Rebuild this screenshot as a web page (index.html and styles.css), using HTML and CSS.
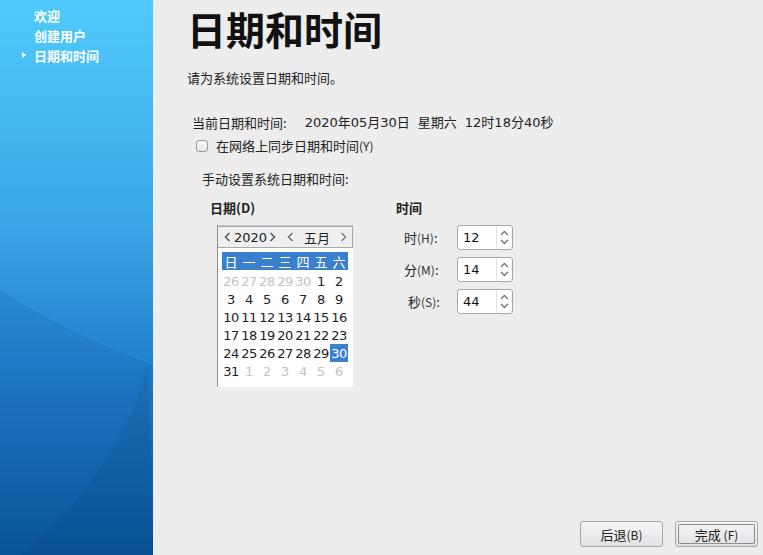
FILE: index.html
```html
<!DOCTYPE html>
<html lang="zh-CN">
<head>
<meta charset="utf-8">
<title>日期和时间</title>
<link rel="stylesheet" href="styles.css">
</head>
<body>
<div class="app">
  <aside class="sidebar">
    <svg class="deco" width="153" height="555" viewBox="0 0 153 555" aria-hidden="true">
      <path d="M0 290 Q70 335 153 365 L153 555 L0 555 Z" fill="#0a3c78" fill-opacity="0.10"/>
      <path d="M148 365 Q120 470 22 555 L153 555 Z" fill="#062f66" fill-opacity="0.10"/>
    </svg>
    <ul class="steps">
      <li>欢迎</li>
      <li>创建用户</li>
      <li class="current">日期和时间</li>
    </ul>
  </aside>
  <main class="main">
    <h1 class="title">日期和时间</h1>
    <p class="subtitle">请为系统设置日期和时间。</p>
    <div class="current-row">
      <span class="cur-label">当前日期和时间:</span>
      <span class="cur-value">2020年05月30日</span>
      <span class="cur-value">星期六</span>
      <span class="cur-value">12时18分40秒</span>
    </div>
    <label class="sync"><span class="checkbox"></span><span>在网络上同步日期和时间<small>(Y)</small></span></label>
    <div class="manual">手动设置系统日期和时间:</div>
    <div class="panels">
      <section class="date-panel">
        <div class="panel-title">日期(D)</div>
        <div class="calendar">
          <div class="cal-nav">
            <svg class="chev" width="7" height="10" viewBox="0 0 7 10"><path d="M5.5 1 L1.5 5 L5.5 9" fill="none" stroke="#555" stroke-width="1.5"/></svg>
            <span class="year">2020</span>
            <svg class="chev" width="7" height="10" viewBox="0 0 7 10"><path d="M1.5 1 L5.5 5 L1.5 9" fill="none" stroke="#555" stroke-width="1.5"/></svg>
            <svg class="chev chev-m" width="7" height="10" viewBox="0 0 7 10"><path d="M5.5 1 L1.5 5 L5.5 9" fill="none" stroke="#666" stroke-width="1.3"/></svg>
            <span class="month">五月</span>
            <svg class="chev chev-r" width="7" height="10" viewBox="0 0 7 10"><path d="M1.5 1 L5.5 5 L1.5 9" fill="none" stroke="#777" stroke-width="1.3"/></svg>
          </div>
          <div class="cal-grid">
            <span class="hd">日</span><span class="hd">一</span><span class="hd">二</span><span class="hd">三</span><span class="hd">四</span><span class="hd">五</span><span class="hd">六</span>
            <span class="o">26</span><span class="o">27</span><span class="o">28</span><span class="o">29</span><span class="o">30</span><span>1</span><span>2</span>
            <span>3</span><span>4</span><span>5</span><span>6</span><span>7</span><span>8</span><span>9</span>
            <span>10</span><span>11</span><span>12</span><span>13</span><span>14</span><span>15</span><span>16</span>
            <span>17</span><span>18</span><span>19</span><span>20</span><span>21</span><span>22</span><span>23</span>
            <span>24</span><span>25</span><span>26</span><span>27</span><span>28</span><span>29</span><span class="sel">30</span>
            <span>31</span><span class="o">1</span><span class="o">2</span><span class="o">3</span><span class="o">4</span><span class="o">5</span><span class="o">6</span>
          </div>
        </div>
      </section>
      <section class="time-panel">
        <div class="panel-title">时间</div>
        <div class="time-rows">
          <div class="trow"><span class="tlabel">时<small>(H)</small>:</span><div class="spin"><span class="sval">12</span><span class="sbtn"><svg width="9" height="6" viewBox="0 0 9 6"><path d="M1 5 L4.5 1.5 L8 5" fill="none" stroke="#777" stroke-width="1.4"/></svg><svg width="9" height="6" viewBox="0 0 9 6"><path d="M1 1 L4.5 4.5 L8 1" fill="none" stroke="#777" stroke-width="1.4"/></svg></span></div></div>
          <div class="trow"><span class="tlabel">分<small>(M)</small>:</span><div class="spin"><span class="sval">14</span><span class="sbtn"><svg width="9" height="6" viewBox="0 0 9 6"><path d="M1 5 L4.5 1.5 L8 5" fill="none" stroke="#777" stroke-width="1.4"/></svg><svg width="9" height="6" viewBox="0 0 9 6"><path d="M1 1 L4.5 4.5 L8 1" fill="none" stroke="#777" stroke-width="1.4"/></svg></span></div></div>
          <div class="trow"><span class="tlabel tl3">秒<small>(S)</small>:</span><div class="spin"><span class="sval">44</span><span class="sbtn"><svg width="9" height="6" viewBox="0 0 9 6"><path d="M1 5 L4.5 1.5 L8 5" fill="none" stroke="#777" stroke-width="1.4"/></svg><svg width="9" height="6" viewBox="0 0 9 6"><path d="M1 1 L4.5 4.5 L8 1" fill="none" stroke="#777" stroke-width="1.4"/></svg></span></div></div>
        </div>
      </section>
    </div>
    <div class="buttons">
      <button class="btn">后退<small>(B)</small></button>
      <button class="btn primary"><span class="inner">完成&nbsp;<small>(F)</small></span></button>
    </div>
  </main>
</div>
</body>
</html>
```

FILE: styles.css
```css
* { box-sizing: border-box; }
html, body { margin: 0; padding: 0; }
body {
  width: 763px;
  height: 555px;
  overflow: hidden;
  background: #ededed;
  font-family: "DejaVu Sans", "Noto Sans CJK SC", sans-serif;
  color: #2b2b2b;
  font-size: 13px;
}
.app { display: flex; height: 555px; }

.sidebar {
  position: relative;
  width: 153px;
  flex: none;
  height: 555px;
  background: linear-gradient(to bottom, #50cbfd 0%, #3ba6e6 40%, #2281cd 65%, #0b569e 100%);
  overflow: hidden;
}
.deco { position: absolute; left: 0; top: 0; }
.steps {
  position: relative;
  list-style: none;
  margin: 0;
  padding: 6px 0 0 34px;
  font-family: "Noto Sans CJK SC", sans-serif;
  font-weight: bold;
  font-size: 13px;
  color: #fff;
}
.steps li { height: 20px; line-height: 20px; position: relative; }
.steps li.current::before {
  content: "";
  position: absolute;
  left: -12px;
  top: 6px;
  border-left: 4px solid #fff;
  border-top: 3.5px solid transparent;
  border-bottom: 3.5px solid transparent;
}

.main {
  position: relative;
  flex: 1;
  padding: 0 0 0 34px;
}
.title {
  margin: 3px 0 0;
  font-family: "Noto Sans CJK SC", sans-serif;
  font-weight: bold;
  font-size: 39px;
  line-height: 50px;
  color: #111;
}
.subtitle {
  margin: 16px 0 0;
  font-family: "Noto Sans CJK SC", sans-serif;
  font-size: 13px;
  line-height: 18px;
  color: #222;
}
.current-row {
  display: flex;
  gap: 8px;
  margin: 27px 0 0 5px;
  line-height: 18px;
  font-size: 13px;
  color: #222;
}
.cur-label { margin-right: 10px; font-family: "Noto Sans CJK SC", sans-serif; }
.cur-value { font-family: "DejaVu Sans", "Noto Sans CJK SC", sans-serif; }
.sync {
  display: flex;
  align-items: center;
  gap: 8px;
  margin: 5px 0 0 9px;
  line-height: 18px;
  font-family: "Noto Sans CJK SC", sans-serif;
  color: #222;
}
.sync small { font-size: 12px; }
.checkbox {
  width: 12px; height: 12px;
  border: 1px solid #9a9a9a;
  border-radius: 3px;
  background: linear-gradient(#fafafa, #e6e6e6);
}
.manual {
  margin: 15px 0 0 15px;
  line-height: 18px;
  font-family: "Noto Sans CJK SC", sans-serif;
  color: #222;
}
.panels { display: flex; margin: 12px 0 0 23px; }
.panel-title {
  font-family: "Noto Sans CJK SC", sans-serif;
  font-weight: bold;
  font-size: 13px;
  line-height: 16px;
  color: #222;
}
.date-panel { width: 186px; }
.calendar {
  margin: 9px 0 0 7px;
  width: 136px;
  height: 162px;
  background: #fff;
  border-left: 1px solid #8c8c8c;
  border-top: 1px solid #c8c8c8;
}
.cal-nav {
  display: flex;
  align-items: center;
  height: 22px;
  background: #efefef;
  border: 1px solid #a8a8a8;
  border-left: none;
  font-size: 13px;
  color: #222;
  padding-left: 6px;
}
.chev { flex: none; }
.cal-nav .year { margin: 0 2px 0 3px; }
.cal-nav .chev-m { margin-left: 11px; }
.cal-nav .month { margin-left: 10px; font-family: "Noto Sans CJK SC", sans-serif; }
.cal-nav .chev-r { margin-left: auto; margin-right: 5px; }
.cal-grid {
  display: grid;
  grid-template-columns: repeat(7, 18px);
  grid-auto-rows: 18px;
  margin: 4px 0 0 4px;
  font-size: 13px;
  color: #222;
}
.cal-grid span {
  display: flex;
  align-items: center;
  justify-content: center;
  letter-spacing: -0.5px;
}
.cal-grid .hd {
  background: #3b80cf;
  color: #fff;
  font-family: "Noto Sans CJK SC", sans-serif;
  letter-spacing: 0;
}
.cal-grid .o { color: #c4c4c4; }
.cal-grid .sel { background: #3b80cf; color: #fff; }
.cal-grid span:nth-child(n+8) { transform: translateY(2px); }

.time-rows { display: flex; flex-direction: column; gap: 7px; margin-top: 9px; }
.trow { display: flex; align-items: center; }
.tlabel {
  width: 61px;
  padding-left: 8px;
  font-family: "Noto Sans CJK SC", sans-serif;
  color: #222;
}
.tlabel small { font-size: 12px; color: #333; }
.tlabel.tl3 { padding-left: 12px; }
.spin {
  display: flex;
  width: 56px;
  height: 25px;
  background: #fff;
  border: 1px solid #a8a8a8;
  border-radius: 3px;
}
.sval { flex: 1; padding-left: 5px; line-height: 23px; color: #111; }
.sbtn {
  width: 16px;
  display: flex;
  flex-direction: column;
  align-items: center;
  justify-content: space-around;
  padding: 2px 0;
  border-left: 1px solid #e4e4e4;
}

.buttons {
  position: absolute;
  right: 5px;
  bottom: 8px;
  display: flex;
  gap: 12px;
}
.btn {
  width: 83px;
  height: 26px;
  border: 1px solid #a6a6a6;
  border-radius: 3px;
  background: linear-gradient(#f6f6f6, #e2e2e2);
  font-family: "Noto Sans CJK SC", sans-serif;
  font-size: 13px;
  color: #222;
  padding: 0;
}
.btn small { font-size: 12px; }
.btn.primary { padding: 2px; }
.btn .inner {
  display: flex;
  align-items: center;
  justify-content: center;
  height: 100%;
  border: 1px solid #8d8d8d;
  border-radius: 1px;
}
```
